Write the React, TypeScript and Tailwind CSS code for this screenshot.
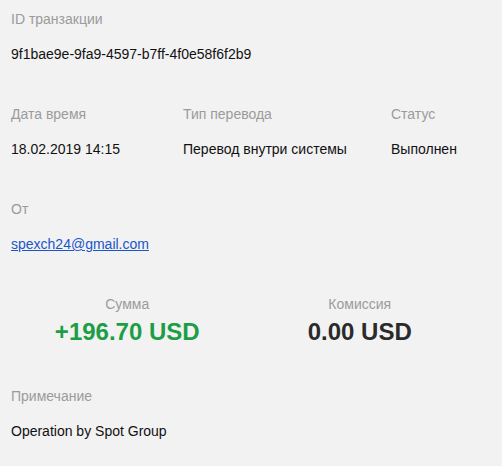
const details = [
    { label: 'Дата время', value: '18.02.2019 14:15', width: 'w-[172px]' },
    { label: 'Тип перевода', value: 'Перевод внутри системы', width: 'w-[208px]' },
    { label: 'Статус', value: 'Выполнен', width: 'flex-1' },
]

function Field({ label, children }: { label: string; children: React.ReactNode }) {
    return (
        <div className="flex flex-col gap-[15px]">
            <div className="text-[#9b9b9b]">{label}</div>
            <div className="text-[#111]">{children}</div>
        </div>
    )
}

export default function App() {
    return (
        <div className="min-h-[466px] w-[502px] bg-[#f2f2f2] px-[11px] pt-[9px] font-['Liberation_Sans',Arial,sans-serif] text-[14px] leading-[20px]">
            <div className="flex flex-col gap-[40px]">
                <Field label="ID транзакции">9f1bae9e-9fa9-4597-b7ff-4f0e58f6f2b9</Field>

                <div className="flex">
                    {details.map((d) => (
                        <div key={d.label} className={d.width}>
                            <Field label={d.label}>{d.value}</Field>
                        </div>
                    ))}
                </div>

                <Field label="От">
                    <a href="#" className="text-[#1a56c8] underline">
                        spexch24@gmail.com
                    </a>
                </Field>

                <div className="grid w-[465px] grid-cols-2 text-center">
                    <div className="flex flex-col gap-[4px]">
                        <div className="text-[#9b9b9b]">Сумма</div>
                        <div className="text-[24px] leading-[28px] font-bold text-[#1b9e45]">
                            +196.70 USD
                        </div>
                    </div>
                    <div className="flex flex-col gap-[4px]">
                        <div className="text-[#9b9b9b]">Комиссия</div>
                        <div className="text-[24px] leading-[28px] font-bold text-[#2a2a2a]">
                            0.00 USD
                        </div>
                    </div>
                </div>

                <Field label="Примечание">Operation by Spot Group</Field>
            </div>
        </div>
    )
}
